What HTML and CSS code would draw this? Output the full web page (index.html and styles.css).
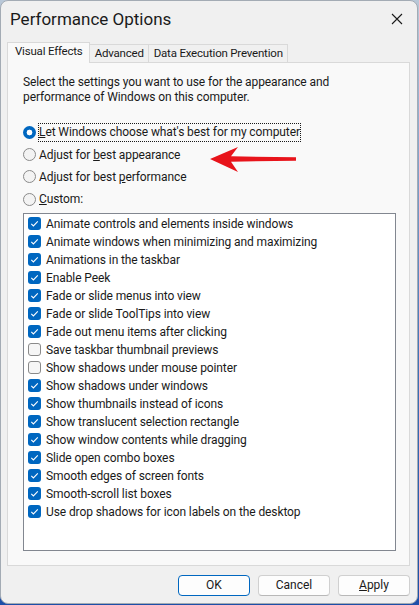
FILE: index.html
```html
<!DOCTYPE html>
<html>
<head>
<meta charset="utf-8">
<link rel="stylesheet" href="styles.css">
</head>
<body>
<div class="window">
  <div class="titlebar">
    <span class="title">Performance Options</span>
    <svg class="close" width="12" height="12" viewBox="0 0 12 12"><path d="M1 1 L11 11 M11 1 L1 11" stroke="#1a1a1a" stroke-width="1.1" fill="none"/></svg>
  </div>
  <div class="tabs">
    <div class="tab active">Visual Effects</div>
    <div class="tab">Advanced</div>
    <div class="tab">Data Execution Prevention</div>
  </div>
  <div class="panel">
    <p class="desc">Select the settings you want to use for the appearance and performance of Windows on this computer.</p>
    <div class="radios">
      <div class="radio-row"><span class="radio on"></span><span class="focus"><u>L</u>et Windows choose what's best for my computer</span></div>
      <div class="radio-row"><span class="radio"></span><span class="lbl">Adjust for <u>b</u>est appearance</span></div>
      <div class="radio-row"><span class="radio"></span><span class="lbl">Adjust for best <u>p</u>erformance</span></div>
      <div class="radio-row"><span class="radio"></span><span class="lbl"><u>C</u>ustom:</span></div>
    </div>
    <div class="list">
      <div class="item"><span class="cb on"></span>Animate controls and elements inside windows</div>
      <div class="item"><span class="cb on"></span>Animate windows when minimizing and maximizing</div>
      <div class="item"><span class="cb on"></span>Animations in the taskbar</div>
      <div class="item"><span class="cb on"></span>Enable Peek</div>
      <div class="item"><span class="cb on"></span>Fade or slide menus into view</div>
      <div class="item"><span class="cb on"></span>Fade or slide ToolTips into view</div>
      <div class="item"><span class="cb on"></span>Fade out menu items after clicking</div>
      <div class="item"><span class="cb"></span>Save taskbar thumbnail previews</div>
      <div class="item"><span class="cb"></span>Show shadows under mouse pointer</div>
      <div class="item"><span class="cb on"></span>Show shadows under windows</div>
      <div class="item"><span class="cb on"></span>Show thumbnails instead of icons</div>
      <div class="item"><span class="cb on"></span>Show translucent selection rectangle</div>
      <div class="item"><span class="cb on"></span>Show window contents while dragging</div>
      <div class="item"><span class="cb on"></span>Slide open combo boxes</div>
      <div class="item"><span class="cb on"></span>Smooth edges of screen fonts</div>
      <div class="item"><span class="cb on"></span>Smooth-scroll list boxes</div>
      <div class="item"><span class="cb on"></span>Use drop shadows for icon labels on the desktop</div>
    </div>
  </div>
  <div class="footer">
    <button class="btn default">OK</button>
    <button class="btn">Cancel</button>
    <button class="btn"><u>A</u>pply</button>
  </div>
  <svg class="arrow" width="100" height="40" viewBox="200 140 100 40"><polygon points="210,160 238,148 231,157.3 296,158.3 296,161.7 231,162.7 238,173" fill="#e8141b"/></svg>
</div>
</body>
</html>
```
FILE: styles.css
```css
* { box-sizing: border-box; }
html, body { margin: 0; padding: 0; }
body {
  width: 419px;
  height: 605px;
  background: linear-gradient(180deg, #b9c8d8 0%, #3f72b8 60%, #1d4fa8 100%);
  font-family: Roboto, "Liberation Sans", sans-serif;
  font-size: 12px;
  letter-spacing: -0.1px;
  color: #1a1a1a;
  overflow: hidden;
}
.window {
  position: relative;
  width: 418px;
  height: 604px;
  background: #f0f0f0;
  border: 1px solid #a3abb4;
  border-radius: 8px;
  display: flex;
  flex-direction: column;
}
.titlebar {
  height: 40px;
  display: flex;
  align-items: center;
  justify-content: space-between;
  padding: 0 14px 0 9px;
  flex: none;
}
.title {
  font-size: 17px;
  letter-spacing: 0;
  color: #1a1a1a;
  margin-top: -4px;
}
.close { margin-top: -5px; }
.tabs {
  display: flex;
  align-items: flex-end;
  margin-left: 6px;
  height: 21px;
  flex: none;
  position: relative;
  z-index: 1;
  font-size: 11.5px;
  letter-spacing: -0.2px;
}
.tab {
  height: 18px;
  padding: 0 4px 0 5px;
  border: 1px solid #d9d9d9;
  border-bottom: none;
  border-left: none;
  background: #f0f0f0;
  display: flex;
  align-items: center;
  line-height: 1;
}
.tab.active {
  height: 21px;
  border-left: 1px solid #d9d9d9;
  background: #f9f9f9;
  padding: 0 6px 2px 7px;
  margin-bottom: -1px;
}
.panel {
  margin: 0 7px 0 6px;
  height: 504px;
  background: #f9f9f9;
  border: 1px solid #d9d9d9;
  padding: 12px 15px 0 15px;
  flex: none;
}
.desc {
  margin: 0;
  line-height: 15px;
  width: 330px;
}
.radios {
  margin-top: 16px;
  display: flex;
  flex-direction: column;
}
.radio-row {
  height: 22.4px;
  display: flex;
  align-items: center;
}
.radio {
  width: 13px;
  height: 13px;
  border-radius: 50%;
  border: 1px solid #8a8a8a;
  background: #f3f3f3;
  flex: none;
  margin-right: 3px;
}
.radio.on {
  border: none;
  background: radial-gradient(circle, #ffffff 0 2.6px, #0067c0 3.2px);
}
.focus {
  outline: 1px dotted #1a1a1a;
  padding: 1px 0 1px 0;
  line-height: 15px;
}
.list {
  margin-top: 2px;
  width: 373px;
  height: 338px;
  background: #ffffff;
  border: 1px solid #828790;
  padding: 1px 4px;
}
.item {
  height: 18px;
  display: flex;
  align-items: center;
  white-space: nowrap;
}
.cb {
  width: 13px;
  height: 13px;
  border-radius: 3px;
  border: 1px solid #8a8a8a;
  background: #f6f6f6;
  margin-right: 5px;
  flex: none;
}
.cb.on {
  border: none;
  background: #0067c0 url("data:image/svg+xml,%3Csvg xmlns='http://www.w3.org/2000/svg' width='13' height='13'%3E%3Cpath d='M3.3 6.8 L5.4 8.9 L9.8 4.4' stroke='white' stroke-width='1.1' fill='none'/%3E%3C/svg%3E") no-repeat center;
}
.footer {
  flex: 1;
  display: flex;
  justify-content: flex-end;
  align-items: center;
  gap: 8px;
  padding: 1px 7px 0 0;
}
.btn {
  width: 72px;
  height: 21px;
  font: inherit;
  color: #1a1a1a;
  background: #fdfdfd;
  border: 1px solid #d0d0d0;
  border-bottom-color: #b8b8b8;
  border-radius: 4px;
  padding: 0;
}
.btn.default {
  border: 1px solid #0067c0;
}
.arrow {
  position: absolute;
  left: 199px;
  top: 138px;
}
```
